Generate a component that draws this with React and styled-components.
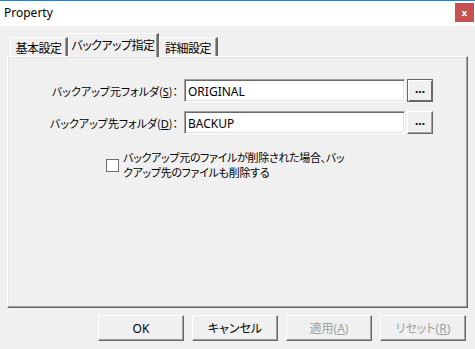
import React from "react";
import styled, { createGlobalStyle } from "styled-components";

const GlobalStyle = createGlobalStyle`
  html, body {
    margin: 0;
    padding: 0;
    background: #f0f0f0;
  }
  body {
    font-family: "Noto Sans", "Noto Sans CJK JP", sans-serif;
  }
`;

const tabs = [
  { label: "基本設定", width: 58 },
  { label: "バックアップ指定", width: 91, active: true },
  { label: "詳細設定", width: 59 },
];

const App = () => {
  return (
    <>
      <GlobalStyle />
      <Window>
        <TitleBar>
          <Title>Property</Title>
          <CloseButton>x</CloseButton>
        </TitleBar>
        <Content>
          <TabStrip>
            {tabs.map((t) => (
              <Tab key={t.label} $active={t.active} $width={t.width}>
                {t.label}
              </Tab>
            ))}
          </TabStrip>
          <Panel>
            <FieldGrid>
              <Label>
                バックアップ元フォルダ(<u>S</u>)：
              </Label>
              <TextBox defaultValue="ORIGINAL" />
              <BrowseButton $default>...</BrowseButton>
              <Label>
                バックアップ先フォルダ(<u>D</u>)：
              </Label>
              <TextBox defaultValue="BACKUP" />
              <BrowseButton>...</BrowseButton>
            </FieldGrid>
            <CheckRow>
              <CheckBox />
              <CheckText>
                バックアップ元のファイルが削除された場合、バッ
                <br />
                クアップ先のファイルも削除する
              </CheckText>
            </CheckRow>
          </Panel>
          <ButtonRow>
            <DialogButton>OK</DialogButton>
            <DialogButton>キャンセル</DialogButton>
            <DialogButton $disabled>
              適用(<u>A</u>)
            </DialogButton>
            <DialogButton $disabled>
              リセット(<u>R</u>)
            </DialogButton>
          </ButtonRow>
        </Content>
      </Window>
    </>
  );
};

// Window
const Window = styled.div`
  width: 475px;
  height: 349px;
  display: flex;
  flex-direction: column;
  background: #f0f0f0;
  overflow: hidden;
`;
// Title bar
const TitleBar = styled.div`
  height: 25px;
  border-top: 1px solid #1883d7;
  background: #fff;
  display: flex;
  align-items: center;
  justify-content: space-between;
  padding: 0 1px 0 4px;
`;
const Title = styled.span`
  font-family: "Noto Sans", sans-serif;
  font-size: 12px;
  color: #000;
  margin-top: -2px;
`;
const CloseButton = styled.div`
  width: 19px;
  height: 19px;
  margin-top: -2px;
  background: #c75050;
  color: #fff;
  font-family: "DejaVu Sans", sans-serif;
  font-weight: bold;
  font-size: 9px;
  display: flex;
  align-items: center;
  justify-content: center;
`;
// Body
const Content = styled.div`
  flex: 1;
  display: flex;
  flex-direction: column;
  padding: 7px 7px 0;
`;
// Tabs
const TabStrip = styled.div`
  height: 24px;
  display: flex;
  align-items: flex-start;
  padding-left: 3px;
  position: relative;
  z-index: 1;
`;
const Tab = styled.div`
  width: ${(p) => p.$width}px;
  height: ${(p) => (p.$active ? 24 : 19)}px;
  margin-top: ${(p) => (p.$active ? 0 : 4)}px;
  box-sizing: border-box;
  background: #f0f0f0;
  border-top: 1px solid #fff;
  border-left: 1px solid #fff;
  border-right: 2px solid #696969;
  box-shadow: inset -1px 0 0 #a0a0a0;
  display: flex;
  align-items: center;
  justify-content: center;
  padding-bottom: ${(p) => (p.$active ? 3 : 0)}px;
  font-family: "Noto Sans CJK JP", sans-serif;
  font-feature-settings: "palt" 1;
  font-size: 12px;
  letter-spacing: -0.5px;
  color: #000;
  white-space: nowrap;
`;
// Panel
const Panel = styled.div`
  height: 252px;
  box-sizing: border-box;
  border-top: 1px solid #fff;
  border-left: 1px solid #fff;
  border-right: 1px solid #696969;
  border-bottom: 1px solid #696969;
  box-shadow: inset -1px -1px 0 #a0a0a0, inset 1px 1px 0 #e3e3e3;
  margin-top: -1px;
  padding-top: 22px;
`;
const FieldGrid = styled.div`
  display: grid;
  grid-template-columns: 176px 221px 28px;
  grid-auto-rows: 23px;
  row-gap: 9px;
  align-items: center;
`;
const Label = styled.label`
  text-align: right;
  padding-right: 6px;
  font-family: "Noto Sans CJK JP", sans-serif;
  font-feature-settings: "palt" 1;
  font-size: 11px;
  color: #000;
  white-space: nowrap;

  u {
    font-family: "Noto Sans", sans-serif;
  }
`;
const TextBox = styled.input`
  width: 100%;
  height: 23px;
  box-sizing: border-box;
  border: 1px solid;
  border-color: #a0a0a0 #fff #fff #a0a0a0;
  box-shadow: inset 1px 1px 0 #696969, inset -1px -1px 0 #e3e3e3;
  background: #fff;
  outline: none;
  padding: 1px 0 0 3px;
  font-family: "Noto Sans", sans-serif;
  font-size: 12px;
  color: #000;
`;
const BrowseButton = styled.button`
  width: 26px;
  height: 23px;
  margin-left: 2px;
  box-sizing: border-box;
  padding: 0 0 4px;
  background: #f0f0f0;
  border: 1px solid;
  border-color: ${(p) => (p.$default ? "#696969" : "#fff #696969 #696969 #fff")};
  box-shadow: ${(p) =>
    p.$default
      ? "inset 1px 1px 0 #fff, inset -1px -1px 0 #696969"
      : "inset -1px -1px 0 #a0a0a0"};
  font-family: "Noto Sans", sans-serif;
  font-size: 12px;
  font-weight: bold;
  color: #000;
  line-height: 1;
`;
// Checkbox
const CheckRow = styled.div`
  display: flex;
  align-items: center;
  gap: 4px;
  margin-top: 16px;
  padding-left: 98px;
`;
const CheckBox = styled.span`
  width: 13px;
  height: 13px;
  box-sizing: border-box;
  border: 1px solid #6d6d6d;
  background: #fff;
  flex-shrink: 0;
`;
const CheckText = styled.div`
  font-family: "Noto Sans CJK JP", sans-serif;
  font-feature-settings: "palt" 1;
  font-size: 11px;
  letter-spacing: -0.3px;
  line-height: 15px;
  color: #000;
  white-space: nowrap;
`;
// Bottom buttons
const ButtonRow = styled.div`
  display: flex;
  justify-content: flex-end;
  gap: 8px;
  margin-top: 7px;
  padding-right: 2px;
`;
const DialogButton = styled.button`
  width: 86px;
  height: 26px;
  box-sizing: border-box;
  padding: 0;
  background: #f0f0f0;
  border: 1px solid;
  border-color: #fff #696969 #696969 #fff;
  box-shadow: inset -1px -1px 0 #a0a0a0;
  font-family: "Noto Sans", "Noto Sans CJK JP", sans-serif;
  font-feature-settings: "palt" 1;
  font-size: 12px;
  color: ${(p) => (p.$disabled ? "#a0a0a0" : "#000")};
`;

export default App;
